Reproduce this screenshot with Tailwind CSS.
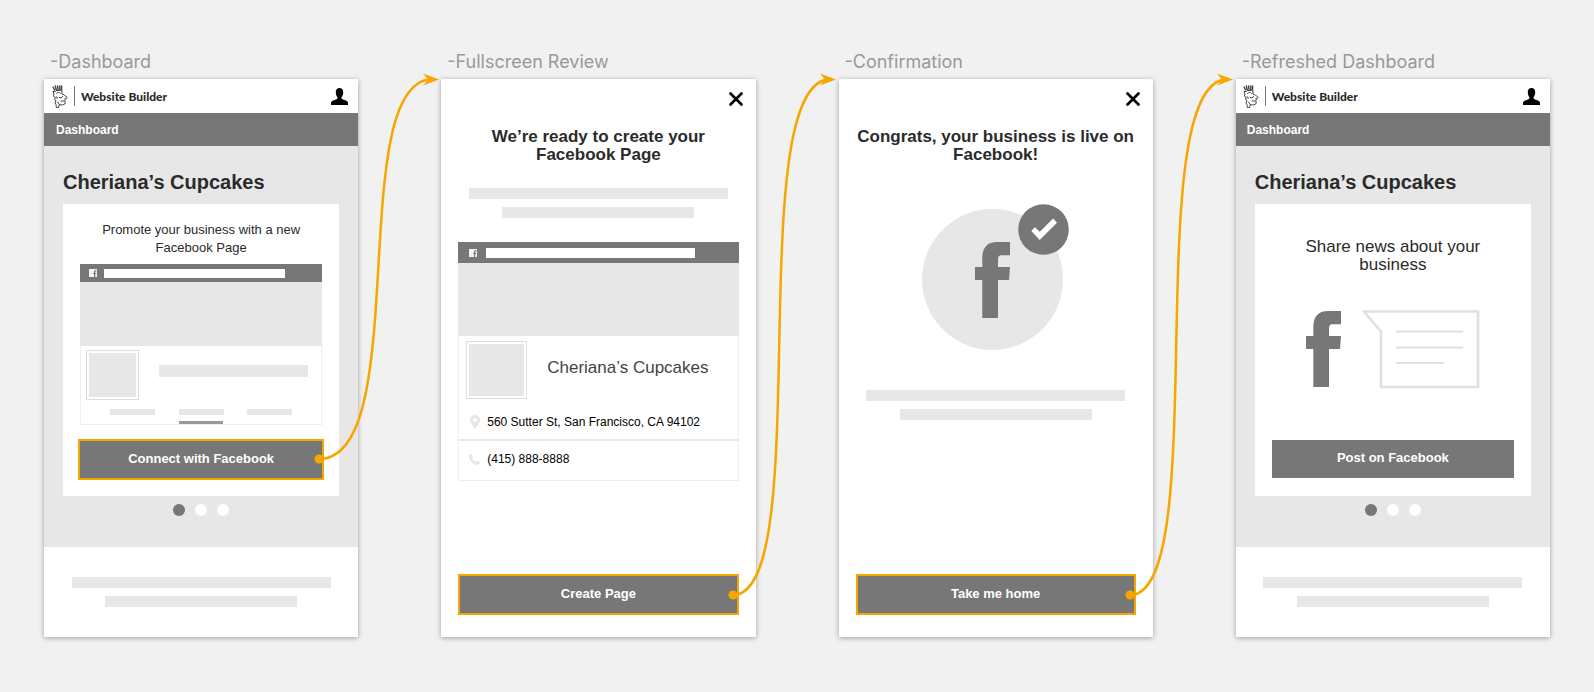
<!DOCTYPE html>
<html lang="en">
<head>
    <meta charset="UTF-8">
    <meta name="viewport" content="width=device-width, initial-scale=1.0">
    <title>Facebook Page Flow</title>
    <script src="https://cdn.jsdelivr.net/npm/@tailwindcss/browser@4"></script>
</head>
<body class="bg-[#f1f1f1] min-h-screen font-['Liberation_Sans',Arial,sans-serif] text-[#2b2b2b]">

    <!-- Shared shapes -->
    <svg class="hidden" aria-hidden="true">
        <symbol id="icon-f" viewBox="0 0 35 76">
            <path fill="#777" d="M35 0H22C12 0 7.300 6 7.300 16v9H0v13h7.300v38H23V38h11l1-13H23v-7c0-3.500 1-4.700 4-4.700h8z"/>
        </symbol>
        <symbol id="icon-fb" viewBox="0 0 8 8">
            <path fill="#f1f1f1" d="M0 0h8v8H6.200V5h1l.2-1.100H6.200V3c0-.5.2-.7.6-.7h.7V1.300H6.400C5.400 1.300 5 1.900 5 2.800v1.100h-.9V5H5v3H0z"/>
        </symbol>
        <symbol id="icon-user" viewBox="0 0 17 17">
            <path d="M8.500 0c2.300 0 3.800 1.600 3.700 4.300 0 2-.6 3.500-1.500 4.700-.5.800-.3 1.700.7 2.200l4 1.600c1.200.5 1.600 1.200 1.600 2.400V17H0v-1.800c0-1.200.4-1.900 1.600-2.400l4-1.600c1-.5 1.200-1.400.7-2.200C5.400 7.800 4.800 6.300 4.800 4.300 4.700 1.600 6.200 0 8.500 0z"/>
        </symbol>
        <symbol id="icon-close" viewBox="0 0 14 14">
            <path d="M1.500 1.500l11 11M12.500 1.500l-11 11" fill="none" stroke="#000" stroke-width="2.600" stroke-linecap="round"/>
        </symbol>
        <symbol id="logo" viewBox="0 0 16 23">
            <g fill="none" stroke="#444" stroke-width="1" stroke-linecap="round" stroke-linejoin="round">
                <path stroke-width="1.400" d="M1 2l1.600 3M3.300 1l1 4M5.600.9l.5 4.100M7.800.9v4M9.600 1v3.600"/>
                <path d="M1.200 6.400l2 .2 1-1 5.600-.5.300 4.200c1.700-.2 2.200 1.200 3.600 1.800 2 .7 2 2.400-.2 2.300"/>
                <path d="M1.200 6.400l.8 3.300-.8 1.300 1.800 1.400-.2 2.700 1.100.7-.8 2.200.9 1.500.3 3 1.300.1M4.500 8.300c1.300-1.300 3-1.300 4 0"/>
                <path d="M7 12.300c1.500 1.100 3 .6 3.500-.8M3.800 12c1.200-.6 2 .6 1.300 1.600M13.200 13.400l-.3 3 .3 2.200-2.600 1.400-3.300-.3-.8 2.900M9 16l3 .1M5.500 17l2 2.700"/>
            </g>
        </symbol>
    </svg>

    <main class="grid grid-cols-4 gap-x-[83px] px-11 pt-[49px] pb-[55px]">

        <!-- Dashboard -->
        <section class="relative flex flex-col">
            <h1 class="h-[30px] pl-[6px] font-['Inter',sans-serif] text-[18px] leading-[26px] text-[#999] whitespace-nowrap">-Dashboard</h1>
            <div class="flex h-[558px] flex-col bg-white shadow-[0_1px_5px_rgba(0,0,0,0.35)]">
                <header class="flex h-[34px] shrink-0 items-center pl-2 pr-[10px]">
                    <svg class="h-[23px] w-4" role="img" aria-label="Logo"><use href="#logo"/></svg>
                    <span class="ml-[6px] h-5 w-px bg-[#777]"></span>
                    <span class="ml-[6px] pt-px font-['Lato',sans-serif] text-[12px] font-black">Website Builder</span>
                    <button class="ml-auto" aria-label="Account"><svg class="size-[17px]"><use href="#icon-user"/></svg></button>
                </header>
                <nav class="flex h-[33px] shrink-0 items-center bg-[#777] px-3 pt-px text-[12px] font-bold text-white"><a href="#">Dashboard</a></nav>
                <div class="flex-1 bg-[#e7e7e7] px-[19px] pt-6">
                    <h2 class="text-[20px] leading-6 font-bold whitespace-nowrap">Cheriana’s Cupcakes</h2>
                    <div class="mt-[10px] flex h-[292px] flex-col bg-white px-4 pt-[17px]">
                        <p class="text-center text-[13px] leading-[18px]">Promote your business with a new<br>Facebook Page</p>
                        <div class="mx-px mt-[7px] flex h-[161px] flex-col">
                            <div class="flex h-[18px] items-center bg-[#777] pl-[9px]">
                                <svg class="size-2"><use href="#icon-fb"/></svg>
                                <span class="ml-[7px] h-[9px] w-[181px] bg-white"></span>
                            </div>
                            <div class="h-16 bg-[#e7e7e7]"></div>
                            <div class="flex flex-1 flex-col border border-t-0 border-[#eee] px-[5px] pt-1">
                                <div class="flex items-center">
                                    <div class="h-[50px] w-[53px] border border-[#ddd] p-[2px]"><div class="h-full bg-[#e7e7e7]"></div></div>
                                    <div class="mr-2 mb-2 ml-5 h-3 flex-1 bg-[#e7e7e7]"></div>
                                </div>
                                <div class="mx-6 mt-[9px] flex justify-between">
                                    <span class="h-[6px] w-[45px] bg-[#e7e7e7]"></span>
                                    <span class="h-[6px] w-[45px] bg-[#e7e7e7]"></span>
                                    <span class="h-[6px] w-[45px] bg-[#e7e7e7]"></span>
                                </div>
                                <div class="mx-auto mt-auto h-[3px] w-11 bg-[#999]"></div>
                            </div>
                        </div>
                        <button class="-mx-px mt-[14px] h-[41px] border-2 border-[#f8a500] bg-[#777] pb-[2px] text-[13px] font-bold text-white">Connect with Facebook</button>
                    </div>
                    <div class="mt-2 flex justify-center gap-[10px]">
                        <span class="size-3 rounded-full bg-[#777]"></span>
                        <span class="size-3 rounded-full bg-white"></span>
                        <span class="size-3 rounded-full bg-white"></span>
                    </div>
                </div>
                <footer class="flex h-[90px] shrink-0 flex-col items-center gap-2 pt-[30px]">
                    <span class="h-[11px] w-[259px] bg-[#e7e7e7]"></span>
                    <span class="h-[11px] w-48 bg-[#e7e7e7]"></span>
                </footer>
            </div>
            <!-- Connector to Fullscreen Review -->
            <svg class="pointer-events-none absolute top-[20px] -right-[83px] z-10 h-[400px] w-[128px]" viewBox="0 0 128 400">
                <path d="M6 390C101 390 31 10 120 10" fill="none" stroke="#f8a500" stroke-width="2.500"/>
                <path d="M126 10.500l-16-6 5 6-5 6z" fill="#f8a500"/>
                <circle cx="6" cy="390" r="4.500" fill="#f8a500"/>
            </svg>
        </section>

        <!-- Fullscreen Review -->
        <section class="relative flex flex-col">
            <h1 class="h-[30px] pl-[6px] font-['Inter',sans-serif] text-[18px] leading-[26px] text-[#999] whitespace-nowrap">-Fullscreen Review</h1>
            <div class="flex h-[558px] flex-col bg-white px-[17px] pt-[13px] pb-[22px] shadow-[0_1px_5px_rgba(0,0,0,0.35)]">
                <button class="mr-[-4px] self-end" aria-label="Close"><svg class="size-[14px]"><use href="#icon-close"/></svg></button>
                <h2 class="mt-[22px] text-center text-[17px] leading-[18px] font-bold">We’re ready to create your<br>Facebook Page</h2>
                <div class="mt-6 flex flex-col items-center gap-2">
                    <span class="h-[11px] w-[259px] bg-[#e7e7e7]"></span>
                    <span class="h-[11px] w-48 bg-[#e7e7e7]"></span>
                </div>
                <div class="mt-6 flex h-[239px] flex-col">
                    <div class="flex h-[21px] items-center bg-[#777] pl-[11px]">
                        <svg class="size-2"><use href="#icon-fb"/></svg>
                        <span class="ml-[9px] h-[10px] w-[209px] bg-white"></span>
                    </div>
                    <div class="h-[73px] bg-[#e7e7e7]"></div>
                    <div class="flex-1 border border-t-0 border-[#eee]">
                        <div class="flex items-center pt-[5px] pl-[7px]">
                            <div class="h-[58px] w-[61px] border border-[#ddd] p-[2px]"><div class="h-full bg-[#e7e7e7]"></div></div>
                            <h3 class="mb-1 ml-5 text-[17px] text-[#444]">Cheriana’s Cupcakes</h3>
                        </div>
                        <p class="flex h-[42px] items-center border-b-2 border-[#e7e7e7] pt-[6px] pl-[11px] text-[12px] text-black">
                            <svg class="h-[14px] w-[10px]" viewBox="0 0 10 14"><path fill="#e7e7e7" fill-rule="evenodd" d="M5 0a5 5 0 015 5c0 3-3 5.500-5 9-2-3.500-5-6-5-9a5 5 0 015-5zm0 3a2 2 0 100 4 2 2 0 000-4z"/></svg>
                            <span class="ml-[7px]">560 Sutter St, San Francisco, CA 94102</span>
                        </p>
                        <p class="flex h-9 items-center pl-[10px] text-[12px] text-black">
                            <svg class="size-[11px]" viewBox="0 0 11 11"><path fill="#e7e7e7" d="M2.300 0L4.200 2.900 3 4.300c.7 1.500 2 2.900 3.700 3.700L8.100 6.800 11 8.600c-.1 1.300-1.100 2.400-2.500 2.400C4 11 0 6.800 0 2.500 0 1.100 1 .1 2.300 0z"/></svg>
                            <span class="ml-[7px]">(415) 888-8888</span>
                        </p>
                    </div>
                </div>
                <button class="mt-auto h-[41px] border-2 border-[#f8a500] bg-[#777] pb-[2px] text-[13px] font-bold text-white">Create Page</button>
            </div>
            <!-- Connector to Confirmation -->
            <svg class="pointer-events-none absolute top-[20px] -right-[83px] z-10 h-[536px] w-[112px]" viewBox="0 0 112 536">
                <path d="M6 526C90 526 13 10 104 10" fill="none" stroke="#f8a500" stroke-width="2.500"/>
                <path d="M109 10.500l-16-6 5 6-5 6z" fill="#f8a500"/>
                <circle cx="6" cy="526" r="4.500" fill="#f8a500"/>
            </svg>
        </section>

        <!-- Confirmation -->
        <section class="relative flex flex-col">
            <h1 class="h-[30px] pl-[6px] font-['Inter',sans-serif] text-[18px] leading-[26px] text-[#999] whitespace-nowrap">-Confirmation</h1>
            <div class="flex h-[558px] flex-col bg-white px-[17px] pt-[13px] pb-[22px] shadow-[0_1px_5px_rgba(0,0,0,0.35)]">
                <button class="mr-[-4px] self-end" aria-label="Close"><svg class="size-[14px]"><use href="#icon-close"/></svg></button>
                <h2 class="mt-[22px] text-center text-[17px] leading-[18px] font-bold">Congrats, your business is live on<br>Facebook!</h2>
                <div class="relative mt-[45px] mr-[6px] flex size-[141px] items-center justify-center self-center rounded-full bg-[#e7e7e7]">
                    <svg class="h-[76px] w-[35px]" role="img" aria-label="Facebook"><use href="#icon-f"/></svg>
                    <svg class="absolute -top-[5px] -right-[6px] size-[51px]" viewBox="0 0 51 51">
                        <circle cx="25.500" cy="25.500" r="25.300" fill="#777"/>
                        <path fill="#fff" d="M13.300 27l3.600-3.700 4.900 4.500L35.200 14.500l3.800 4.200L21.700 36z"/>
                    </svg>
                </div>
                <div class="mt-10 flex flex-col items-center gap-2">
                    <span class="h-[11px] w-[259px] bg-[#e7e7e7]"></span>
                    <span class="h-[11px] w-48 bg-[#e7e7e7]"></span>
                </div>
                <button class="mt-auto h-[41px] border-2 border-[#f8a500] bg-[#777] pb-[2px] text-[13px] font-bold text-white">Take me home</button>
            </div>
            <!-- Connector to Refreshed Dashboard -->
            <svg class="pointer-events-none absolute top-[20px] -right-[83px] z-10 h-[536px] w-[112px]" viewBox="0 0 112 536">
                <path d="M6 526C90 526 13 10 104 10" fill="none" stroke="#f8a500" stroke-width="2.500"/>
                <path d="M109 10.500l-16-6 5 6-5 6z" fill="#f8a500"/>
                <circle cx="6" cy="526" r="4.500" fill="#f8a500"/>
            </svg>
        </section>

        <!-- Refreshed Dashboard -->
        <section class="relative flex flex-col">
            <h1 class="h-[30px] pl-[6px] font-['Inter',sans-serif] text-[18px] leading-[26px] text-[#999] whitespace-nowrap">-Refreshed Dashboard</h1>
            <div class="flex h-[558px] flex-col bg-white shadow-[0_1px_5px_rgba(0,0,0,0.35)]">
                <header class="flex h-[34px] shrink-0 items-center pl-[7px] pr-[10px]">
                    <svg class="h-[23px] w-4" role="img" aria-label="Logo"><use href="#logo"/></svg>
                    <span class="ml-[6px] h-5 w-px bg-[#777]"></span>
                    <span class="ml-[6px] pt-px font-['Lato',sans-serif] text-[12px] font-black">Website Builder</span>
                    <button class="ml-auto" aria-label="Account"><svg class="size-[17px]"><use href="#icon-user"/></svg></button>
                </header>
                <nav class="flex h-[33px] shrink-0 items-center bg-[#777] px-[11px] pt-px text-[12px] font-bold text-white"><a href="#">Dashboard</a></nav>
                <div class="flex-1 bg-[#e7e7e7] px-[19px] pt-6">
                    <h2 class="text-[20px] leading-6 font-bold whitespace-nowrap">Cheriana’s Cupcakes</h2>
                    <div class="mt-[10px] flex h-[292px] flex-col bg-white px-[17px] pt-[34px] pb-[18px]">
                        <p class="text-center text-[17px] leading-[18px]">Share news about your<br>business</p>
                        <div class="mt-9 flex justify-center gap-[21px]">
                            <svg class="mt-px h-[76px] w-[35px]" role="img" aria-label="Facebook"><use href="#icon-f"/></svg>
                            <svg class="h-[79px] w-[118px]" viewBox="0 0 118 79" fill="none" stroke="#e0e0e0">
                                <path stroke-width="2.600" d="M2 1.500h114v75.500H19V21.500z"/>
                                <path stroke-width="2" d="M34 21.500h67M34 37.500h67M34 53h48"/>
                            </svg>
                        </div>
                        <button class="mt-auto h-[38px] bg-[#777] pb-[2px] text-[13px] font-bold text-white">Post on Facebook</button>
                    </div>
                    <div class="mt-2 flex justify-center gap-[10px]">
                        <span class="size-3 rounded-full bg-[#777]"></span>
                        <span class="size-3 rounded-full bg-white"></span>
                        <span class="size-3 rounded-full bg-white"></span>
                    </div>
                </div>
                <footer class="flex h-[90px] shrink-0 flex-col items-center gap-2 pt-[30px]">
                    <span class="h-[11px] w-[259px] bg-[#e7e7e7]"></span>
                    <span class="h-[11px] w-48 bg-[#e7e7e7]"></span>
                </footer>
            </div>
        </section>
    </main>

</body>
</html>
